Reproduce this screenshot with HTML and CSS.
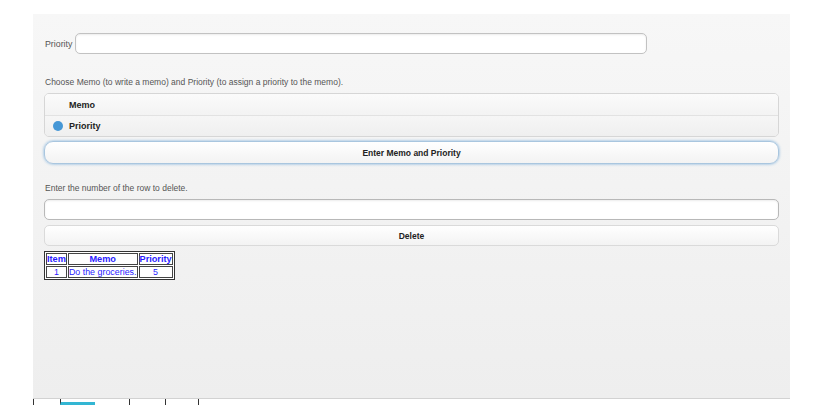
FILE: index.html
```html
<!DOCTYPE html>
<html lang="en">

<head>
    <meta charset="UTF-8">
    <meta name="viewport" content="width=device-width, initial-scale=1.0">
    <title>Memo Priorities</title>
    <link rel="stylesheet" href="styles.css">
</head>

<body>
    <div class="page">
        <div class="panel">
            <div class="field-row">
                <label for="priority">Priority</label>
                <input type="text" id="priority" class="text-input short">
            </div>

            <p class="hint first">Choose Memo (to write a memo) and Priority (to assign a priority to the memo).</p>

            <div class="choice-group">
                <div class="choice">
                    <span class="dot off"></span>
                    <span>Memo</span>
                </div>
                <div class="choice">
                    <span class="dot"></span>
                    <span>Priority</span>
                </div>
            </div>

            <button class="btn focused">Enter Memo and Priority</button>

            <p class="hint">Enter the number of the row to delete.</p>
            <input type="text" class="text-input wide">
            <button class="btn">Delete</button>

            <table class="memo-table">
                <thead>
                    <tr>
                        <th>Item</th>
                        <th>Memo</th>
                        <th>Priority</th>
                    </tr>
                </thead>
                <tbody>
                    <tr>
                        <td class="num">1</td>
                        <td>Do the groceries.</td>
                        <td class="num">5</td>
                    </tr>
                </tbody>
            </table>
        </div>

        <!-- strip of the window below the panel -->
        <div class="tabs">
            <span class="tab first"></span>
            <span class="tab active"></span>
            <span class="tab blank"></span>
            <span class="tab mid"></span>
            <span class="tab"></span>
            <span class="tab last"></span>
        </div>
    </div>
</body>

</html>
```

FILE: styles.css
```css
body {
    margin: 0;
    padding: 0;
    background-color: #ffffff;
    font-family: "Liberation Sans", Arial, sans-serif;
}

.page {
    width: 757px;
    margin: 14px 0 0 33px;
}

.panel {
    height: 384px;
    box-sizing: border-box;
    padding: 19px 11px 0;
    background: linear-gradient(#f7f7f7, #eeeeee);
}

.field-row {
    display: flex;
    align-items: center;
    gap: 3px;
    padding-left: 1px;
}

.field-row label {
    font-size: 8.8px;
    color: #555;
}

.text-input {
    height: 21px;
    box-sizing: border-box;
    border: 1px solid #c2c2c2;
    border-radius: 5px;
    background: #ffffff;
    box-shadow: inset 0 1px 2px rgba(0, 0, 0, 0.08);
    padding: 0 6px;
}

.short {
    width: 572px;
}

.wide {
    display: block;
    width: 735px;
    margin-top: 6px;
    border-color: #b8b8b8;
}

.hint {
    margin: 19px 0 0 1px;
    font-size: 8.5px;
    line-height: 10px;
    color: #555;
}

.hint.first {
    margin-top: 23px;
}

.choice-group {
    margin-top: 6px;
    border: 1px solid #d6d6d6;
    border-radius: 5px;
    overflow: hidden;
}

.choice {
    display: flex;
    align-items: center;
    gap: 6px;
    height: 21px;
    box-sizing: border-box;
    padding-left: 8px;
    font-size: 9px;
    font-weight: bold;
    color: #222;
    background: linear-gradient(#fbfbfb, #f3f3f3);
}

.choice + .choice {
    border-top: 1px solid #e2e2e2;
    background: linear-gradient(#f6f6f6, #efefef);
}

.dot {
    width: 10px;
    height: 10px;
    border-radius: 50%;
    background-color: #4597d6;
}

.dot.off {
    background-color: transparent;
}

.btn {
    display: block;
    width: 735px;
    height: 21px;
    margin-top: 5px;
    border: 1px solid #dadada;
    border-radius: 5px;
    background: linear-gradient(#ffffff, #f3f3f3);
    font-family: "Liberation Sans", Arial, sans-serif;
    font-size: 8.5px;
    font-weight: bold;
    color: #222;
    cursor: pointer;
}

.btn.focused {
    height: 23px;
    margin-top: 4px;
    border-color: #a9c6df;
    border-radius: 9px;
    box-shadow: 0 0 3px #7aaedb;
}

.memo-table {
    margin-top: 5px;
    border: 1px solid #333;
    border-spacing: 1px;
    font-size: 8.9px;
    color: #2a1cff;
    background: #ffffff;
}

.memo-table th,
.memo-table td {
    border: 1px solid #444;
    padding: 0;
    height: 10px;
    line-height: 10px;
}

.memo-table th {
    font-size: 9.2px;
    text-align: center;
}

.memo-table td.num {
    text-align: center;
}

.tabs {
    display: flex;
    align-items: stretch;
    height: 6px;
    border-top: 1px solid #d2d2d2;
}

.tab {
    width: 32px;
    border-left: 1px solid #333;
}

.tab.first {
    width: 26px;
}

.tab.active {
    width: 34px;
    border-bottom: 3px solid #33b6d3;
}

.tab.blank {
    width: 34px;
    border-left: none;
}

.tab.mid {
    width: 35px;
}

.tab.last {
    width: 0;
}
```
